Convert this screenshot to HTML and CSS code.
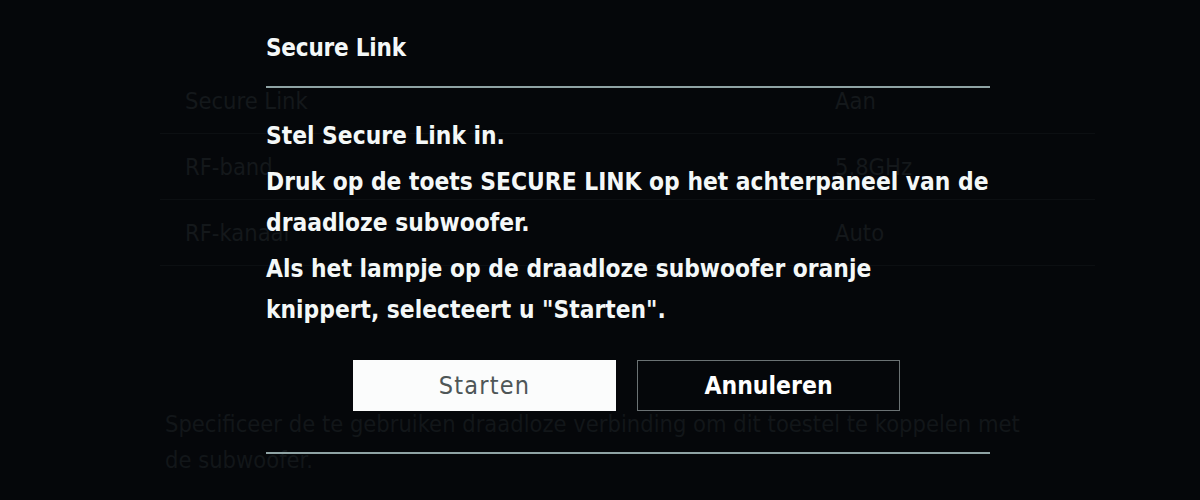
FILE: index.html
```html
<!DOCTYPE html>
<html lang="nl">
<head>
  <meta charset="UTF-8" />
  <title>Secure Link</title>
  <meta name="viewport" content="width=device-width, initial-scale=1.0"/>
  <link rel="stylesheet" href="styles.css">
</head>
<body>
  <!-- settings menu behind the dialog -->
  <div class="menu">
    <div class="row">
      <span class="label">Secure Link</span>
      <span class="value">Aan</span>
    </div>
    <div class="row">
      <span class="label">RF-band</span>
      <span class="value">5.8GHz</span>
    </div>
    <div class="row">
      <span class="label">RF-kanaal</span>
      <span class="value">Auto</span>
    </div>
  </div>
  <p class="help">Specificeer de te gebruiken draadloze verbinding om dit toestel te koppelen met de subwoofer.</p>

  <!-- Secure Link dialog -->
  <div class="dialog">
    <h1 class="dialog-title">Secure Link</h1>
    <div class="dialog-body">
      <p>Stel Secure Link in.</p>
      <p>Druk op de toets SECURE LINK op het achterpaneel van de draadloze subwoofer.</p>
      <p>Als het lampje op de draadloze subwoofer oranje<br>knippert, selecteert u "Starten".</p>
    </div>
    <div class="buttons">
      <button class="btn btn-focus">Starten</button>
      <button class="btn">Annuleren</button>
    </div>
  </div>
</body>
</html>
```

FILE: styles.css
```css
body {
  margin: 0;
  width: 1200px;
  height: 500px;
  overflow: hidden;
  background-color: #05070a;
  font-family: 'DejaVu Sans Condensed', 'DejaVu Sans', sans-serif;
  position: relative;
}
.menu {
  margin: 68px 105px 0 160px;
}
.row {
  display: flex;
  align-items: center;
  height: 65px;
  padding-left: 25px;
  border-bottom: 1px solid #0c0f12;
  font-size: 23.5px;
  color: #14181b;
}
.label {
  width: 650px;
}
.help {
  margin: 140px 0 0 165px;
  width: 880px;
  font-size: 23.5px;
  line-height: 36px;
  color: #121619;
}
.dialog {
  position: absolute;
  left: 266px;
  top: 0;
  width: 724px;
  color: #f4f8f8;
}
.dialog-title {
  margin: 0;
  padding-top: 33px;
  height: 88px;
  box-sizing: border-box;
  font-size: 24px;
  font-weight: bold;
  line-height: 30px;
  letter-spacing: -0.2px;
  border-bottom: 2px solid #8fa3a4;
}
.dialog-body {
  padding-top: 27px;
}
.dialog-body p {
  margin: 0 0 5px 0;
  font-size: 24.3px;
  font-weight: bold;
  line-height: 41px;
}
.buttons {
  display: flex;
  justify-content: center;
  gap: 21px;
  margin-top: 30px;
  padding-right: 3px;
  padding-bottom: 41px;
  border-bottom: 2px solid #8fa3a4;
}
.btn {
  width: 263px;
  height: 51px;
  font-family: inherit;
  font-size: 24.5px;
  font-weight: bold;
  color: #ffffff;
  background-color: #05070a;
  border: 1px solid #6b7274;
  border-radius: 0;
}
.btn-focus {
  background-color: #fbfcfc;
  color: #4e5657;
  font-weight: normal;
  font-size: 25px;
  letter-spacing: 1.2px;
  border-color: #fbfcfc;
}
```
